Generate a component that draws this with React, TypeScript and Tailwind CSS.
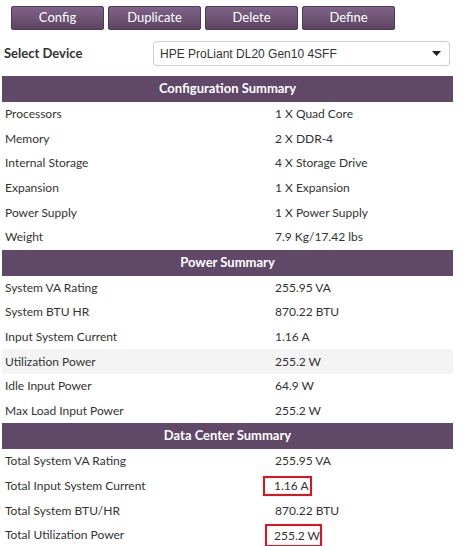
import React from 'react';

type Row = { label: string; value: string; boxed?: 'a' | 'b'; hover?: boolean };

const config: Row[] = [
  { label: 'Processors', value: '1 X Quad Core' },
  { label: 'Memory', value: '2 X DDR-4' },
  { label: 'Internal Storage', value: '4 X Storage Drive' },
  { label: 'Expansion', value: '1 X Expansion' },
  { label: 'Power Supply', value: '1 X Power Supply' },
  { label: 'Weight', value: '7.9 Kg/17.42 lbs' },
];

const power: Row[] = [
  { label: 'System VA Rating', value: '255.95 VA' },
  { label: 'System BTU HR', value: '870.22 BTU' },
  { label: 'Input System Current', value: '1.16 A' },
  { label: 'Utilization Power', value: '255.2 W', hover: true },
  { label: 'Idle Input Power', value: '64.9 W' },
  { label: 'Max Load Input Power', value: '255.2 W' },
];

const dataCenter: Row[] = [
  { label: 'Total System VA Rating', value: '255.95 VA' },
  { label: 'Total Input System Current', value: '1.16 A', boxed: 'a' },
  { label: 'Total System BTU/HR', value: '870.22 BTU' },
  { label: 'Total Utilization Power', value: '255.2 W', boxed: 'b' },
];

const Section = ({ title, rows }: { title: string; rows: Row[] }) => (
  <div>
    <div className="h-[26px] bg-[#604868] flex items-center justify-center text-white font-bold text-[13px]">
      {title}
    </div>
    {rows.map((r) => (
      <div
        key={r.label}
        className={`h-[24.6px] flex items-center text-[12px] text-[#333] ${r.hover ? 'bg-[#f4f4f4]' : ''}`}
      >
        <div className="w-[273px] pl-[3px]">{r.label}</div>
        <div className="flex-1">
          {r.boxed === 'a' && (
            <span className="block w-[49px] h-[20px] leading-[16px] whitespace-nowrap border-2 border-[#e8101a] -ml-[12px] pl-[9px]">{r.value}</span>
          )}
          {r.boxed === 'b' && (
            <span className="block w-[57px] h-[23px] leading-[19px] whitespace-nowrap border-2 border-[#e8101a] -ml-[10px] pl-[7px]">{r.value}</span>
          )}
          {!r.boxed && r.value}
        </div>
      </div>
    ))}
  </div>
);

export default function App() {
  const buttons = ['Config', 'Duplicate', 'Delete', 'Define'];
  return (
    <div className="w-[460px] h-[546px] overflow-hidden bg-white font-['Lato',sans-serif]">
      <div className="flex gap-[4px] pl-[11px] pt-[6px]">
        {buttons.map((b) => (
          <button
            key={b}
            className="w-[93px] h-[24px] rounded-[3px] bg-gradient-to-b from-[#80658a] to-[#5b4361] text-white text-[13px] shadow-[inset_0_0_0_1px_#4f3a55]"
          >
            {b}
          </button>
        ))}
      </div>
      <div className="flex items-center mt-[11px] h-[25px]">
        <div className="w-[153px] pl-[4px] font-bold text-[13px] text-[#333]">Select Device</div>
        <div className="w-[297px] h-[25px] border border-[#ccc] rounded-[4px] flex items-center justify-between pl-[6px] pr-[8px] text-[12px] text-[#333] font-['Liberation_Sans',sans-serif]">
          <span>HPE ProLiant DL20 Gen10 4SFF</span>
          <svg width="9" height="5" viewBox="0 0 9 5"><path d="M0 0h9L4.5 5z" fill="#222" /></svg>
        </div>
      </div>
      <div className="ml-[2px] w-[451px] mt-[10px]">
        <Section title="Configuration Summary" rows={config} />
        <Section title="Power Summary" rows={power} />
        <Section title="Data Center Summary" rows={dataCenter} />
      </div>
    </div>
  );
}
